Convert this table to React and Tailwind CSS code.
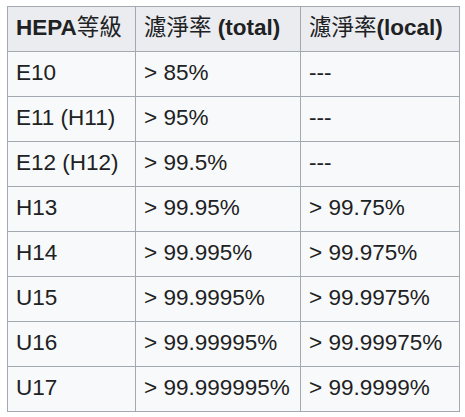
import React from 'react';

const rows = [
  ['E10', '> 85%', '---'],
  ['E11 (H11)', '> 95%', '---'],
  ['E12 (H12)', '> 99.5%', '---'],
  ['H13', '> 99.95%', '> 99.75%'],
  ['H14', '> 99.995%', '> 99.975%'],
  ['U15', '> 99.9995%', '> 99.9975%'],
  ['U16', '> 99.99995%', '> 99.99975%'],
  ['U17', '> 99.999995%', '> 99.9999%'],
];

const cell = 'h-[45px] flex items-center pl-[8px] pb-[3px] border-r border-b border-[#a2a9b1] whitespace-nowrap';

const App = () => {
  return (
    <div className="min-h-screen bg-white pt-[6px] pl-[7px]">
      <div
        className="grid grid-cols-[128px_165px_159px] w-[453px] border-l border-t border-[#a2a9b1] text-[22.5px] text-[#202122]"
        style={{ fontFamily: '"Liberation Sans", "Noto Sans CJK TC", sans-serif' }}
      >
        <div className={`${cell} bg-[#eaecf0] font-bold`}>
          HEPA<span className="font-normal">等級</span>
        </div>
        <div className={`${cell} bg-[#eaecf0] font-bold`}>
          <span className="font-normal">濾淨率</span>&nbsp;(total)
        </div>
        <div className={`${cell} bg-[#eaecf0] font-bold`}>
          <span className="font-normal">濾淨率</span>(local)
        </div>

        {rows.map(r => (
          <React.Fragment key={r[0]}>
            {r.map((v, i) => (
              <div key={i} className={`${cell} bg-[#f8f9fa]`}>{v}</div>
            ))}
          </React.Fragment>
        ))}
      </div>
    </div>
  );
};

export default App;
